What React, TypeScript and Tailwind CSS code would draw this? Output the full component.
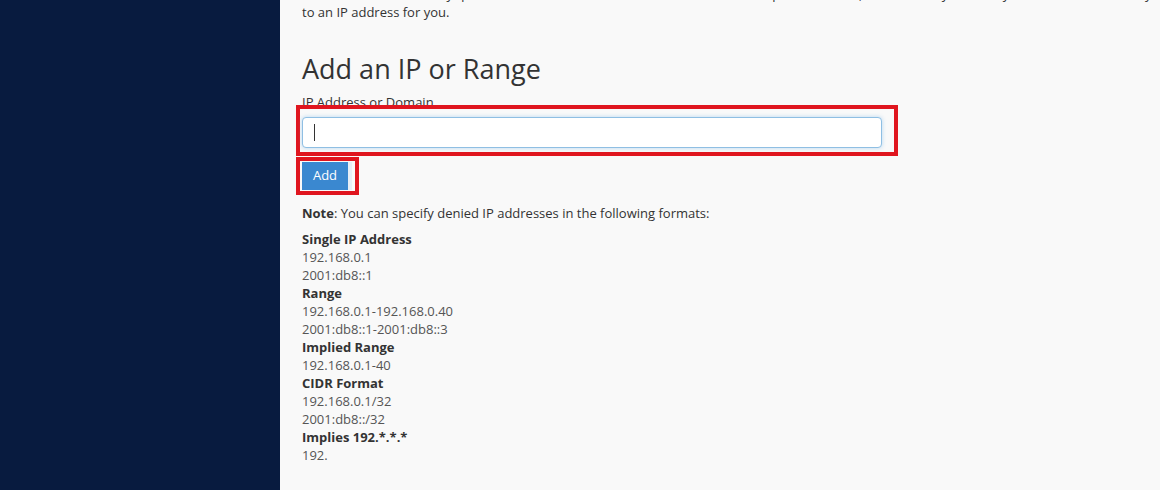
const formats: { title: string; items: string[] }[] = [
  { title: 'Single IP Address', items: ['192.168.0.1', '2001:db8::1'] },
  { title: 'Range', items: ['192.168.0.1-192.168.0.40', '2001:db8::1-2001:db8::3'] },
  { title: 'Implied Range', items: ['192.168.0.1-40'] },
  { title: 'CIDR Format', items: ['192.168.0.1/32', '2001:db8::/32'] },
  { title: 'Implies 192.*.*.*', items: ['192.'] },
]

export default function App() {
  return (
    <div
      className="flex h-[490px] w-[1160px] overflow-hidden bg-[#f9f9f9] text-[#333]"
      style={{ fontFamily: '"Open Sans", "Noto Sans", sans-serif' }}
    >
      <aside className="w-[280px] shrink-0 bg-[#081b3f]" />

      <main className="flex min-w-0 flex-1 flex-col pl-[22px] pr-[10px]">
        <div className="mt-[-15px] flex flex-col text-[13px] leading-[18px]">
          <span className="overflow-hidden whitespace-nowrap">
            You can also enter a fully qualified domain name and the IP Blocker will attempt to resolve it, then it will try to block your selected domain by converting it
          </span>
          <span>to an IP address for you.</span>
        </div>

        <h2 className="mt-[30px] text-[27px] font-normal leading-[36px] text-[#333]">Add an IP or Range</h2>

        <label className="mt-[6px] text-[13px] leading-[18px]">IP Address or Domain</label>

        <div className="ml-[-6px] mt-[-6px] w-[602px] border-4 border-[#e0161f] pb-[4px] pl-[2px] pr-[12px] pt-[8px]">
          <div className="flex h-[31px] items-center rounded-[4px] border border-[#8fbfe3] bg-white pl-[11px] shadow-[0_0_4px_rgba(102,175,233,0.45)]">
            <span className="h-[17px] w-px bg-[#333]" />
          </div>
        </div>

        <div className="ml-[-6px] mt-px flex w-[63px] border-4 border-[#e0161f] py-px pl-[2px]">
          <button
            type="button"
            className="h-[28px] w-[46px] bg-[#3a88d0] text-[13px] text-white shadow-[4px_0_0_#e6eef6]"
          >
            Add
          </button>
        </div>

        <p className="mt-[9px] text-[13px] leading-[18px]">
          <b className="font-bold">Note</b>: You can specify denied IP addresses in the following formats:
        </p>

        <div className="mt-[8px] flex flex-col text-[13px] leading-[18px]">
          {formats.map((f) => (
            <div key={f.title} className="flex flex-col">
              <span className="font-bold text-[#333]">{f.title}</span>
              {f.items.map((it) => (
                <span key={it} className="text-[#555]">
                  {it}
                </span>
              ))}
            </div>
          ))}
        </div>
      </main>
    </div>
  )
}
